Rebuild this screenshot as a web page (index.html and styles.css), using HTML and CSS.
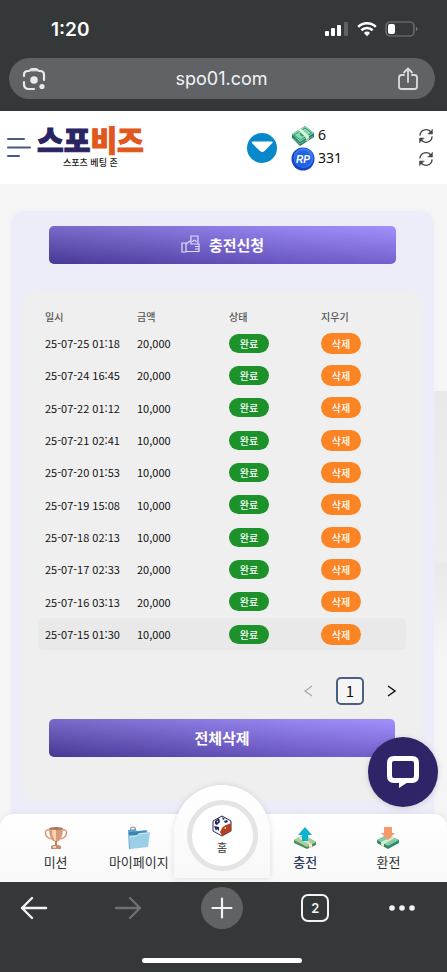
FILE: index.html
```html
<!DOCTYPE html>
<html lang="ko">
<head>
    <meta charset="UTF-8">
    <meta name="viewport" content="width=device-width, initial-scale=1.0">
    <title>스포비즈 - 충전신청</title>
    <link rel="stylesheet" href="styles.css">
</head>
<body>
    <div class="browser-top">
        <div class="status-bar">
            <span class="clock">1:20</span>
            <div class="status-icons">
                <svg width="24" height="16" viewBox="0 0 24 16" fill="#fff">
                    <rect x="0" y="10" width="4" height="5" rx="1"/>
                    <rect x="6" y="7" width="4" height="8" rx="1"/>
                    <rect x="12" y="4" width="4" height="11" rx="1"/>
                    <rect x="19" y="1" width="4" height="14" rx="1" fill="#5f6263"/>
                </svg>
                <svg width="20" height="16" viewBox="0 0 20 16" fill="none" stroke="#fff" stroke-width="2.6">
                    <path d="M1.2 5.9a12.6 12.6 0 0 1 17.6 0"/>
                    <path d="M4.4 9.3a8 8 0 0 1 11.2 0"/>
                    <path d="M10 15.2l-3.1-3.3a4.4 4.4 0 0 1 6.2 0z" fill="#fff" stroke="none"/>
                </svg>
                <svg width="33" height="16" viewBox="0 0 33 16">
                    <rect x="1" y="1" width="28" height="14" rx="4" fill="none" stroke="#777a7b" stroke-width="1.2"/>
                    <rect x="3" y="3" width="7" height="10" rx="2" fill="#fff"/>
                    <path d="M31 6v4q1.5-.4 1.5-2t-1.5-2z" fill="#777a7b"/>
                </svg>
            </div>
        </div>
        <div class="address-bar">
            <button aria-label="이미지 검색">
                <svg width="24" height="24" viewBox="0 0 24 24" fill="none" stroke="#e8eaed" stroke-width="2.2" stroke-linecap="round">
                    <path d="M2 9V8q0-4 4-4h1M17 4h1q4 0 4 4v5M2 15v2q0 5 5 5h5"/>
                    <path d="M7 3.5q1-2 3-2h4q2 0 3 2z" fill="#e8eaed" stroke-width="1"/>
                    <circle cx="12" cy="13" r="3.8" fill="#e8eaed" stroke="none"/>
                    <circle cx="20" cy="19.5" r="2.6" fill="#e8eaed" stroke="none"/>
                </svg>
            </button>
            <input type="text" value="spo01.com" aria-label="주소">
            <button aria-label="공유">
                <svg width="22" height="24" viewBox="0 0 22 24" fill="none" stroke="#dadce0" stroke-width="1.8" stroke-linecap="round" stroke-linejoin="round">
                    <path d="M7 8H4.5Q2 8 2 10.5v9Q2 22 4.5 22h13q2.5 0 2.5-2.5v-9Q20 8 17.5 8H15"/>
                    <path d="M11 15V2M7 5.5l4-4 4 4"/>
                </svg>
            </button>
        </div>
    </div>

    <div class="site">
        <header>
            <button class="menu-btn" aria-label="메뉴">
                <svg width="26" height="22" viewBox="0 0 26 22" stroke="#4b5a85" stroke-width="2" stroke-linecap="round">
                    <path d="M2 2h16M2 10.5h22M2 19h11"/>
                </svg>
            </button>
            <a href="#" class="logo">
                <span class="logo-name">스포<b>비즈</b></span>
                <span class="logo-sub">스포츠 베팅 존</span>
            </a>
            <div class="wallet">
                <button class="toggle-btn" aria-label="펼치기">
                    <svg width="30" height="30" viewBox="0 0 30 30">
                        <circle cx="15" cy="15" r="15" fill="#0788cb"/>
                        <path d="M6 8.5h18.5q2 0 .8 1.6l-7.8 8q-2.3 2-4.6 0l-8-8Q4 8.500 6 8.500z" fill="#fff"/>
                    </svg>
                </button>
                <div class="balances">
                    <div class="balance">
                        <svg width="24" height="22" viewBox="0 0 24 22">
                            <path d="M1 9l13-8 9 7v4l-14 9-8-8z" fill="#237b60"/>
                            <path d="M1 9l13-8 9 7-14 9z" fill="#8ad9b2"/>
                            <path d="M3 10l11-7 6.5 5-11 7z" fill="none" stroke="#35966f" stroke-width="1"/>
                            <ellipse cx="12" cy="9" rx="3.2" ry="2.3" fill="#38a17b"/>
                            <path d="M7 5l3-1.5 8 7.5-.2 4-2.8 1.5v-4z" fill="#e0f5dc"/>
                            <path d="M2 13l7 6 13-8" fill="none" stroke="#6bbd98" stroke-width="1"/>
                        </svg>
                        <span>6</span>
                        <button aria-label="새로고침">
                            <svg width="16" height="16" viewBox="0 0 16 16" fill="none" stroke="#444" stroke-width="1.4" stroke-linecap="round">
                                <path d="M2 7a6 6 0 0 1 11-2.6M14 9a6 6 0 0 1-11 2.6"/>
                                <path d="M14.5 1.5v4.5h-4.5zM1.5 14.5V10H6z" fill="#444" stroke-width=".5"/>
                            </svg>
                        </button>
                    </div>
                    <div class="balance">
                        <svg width="24" height="24" viewBox="0 0 24 24">
                            <circle cx="12" cy="12" r="11.5" fill="#1742c4"/>
                            <circle cx="12.5" cy="11" r="10" fill="#377cf5"/>
                            <circle cx="12" cy="12" r="8.5" fill="#2162df"/>
                            <text x="12" y="16" text-anchor="middle" class="rp">RP</text>
                        </svg>
                        <span>331</span>
                        <button aria-label="새로고침">
                            <svg width="16" height="16" viewBox="0 0 16 16" fill="none" stroke="#444" stroke-width="1.4" stroke-linecap="round">
                                <path d="M2 7a6 6 0 0 1 11-2.6M14 9a6 6 0 0 1-11 2.6"/>
                                <path d="M14.5 1.5v4.5h-4.5zM1.5 14.5V10H6z" fill="#444" stroke-width=".5"/>
                            </svg>
                        </button>
                    </div>
                </div>
            </div>
        </header>

        <main>
            <div class="backdrop"></div>
            <section class="panel">
                <button class="main-btn">
                    <svg width="20" height="20" viewBox="0 0 20 20" fill="none" stroke="#e4defc" stroke-width="1.2">
                        <path d="M1 9h4v9H1zM5 10l4-3h1v3h8v7.5H5zM10 9V2h7v7.5M11.5 8q1-2 2-2t2 2M14 12.5h4M14 15h4"/>
                    </svg>
                    충전신청
                </button>

                <div class="history">
                    <table>
                        <thead>
                            <tr><th>일시</th><th>금액</th><th>상태</th><th>지우기</th></tr>
                        </thead>
                        <tbody>
                            <tr><td>25-07-25 01:18</td><td>20,000</td><td><span class="done">완료</span></td><td><button class="delete">삭제</button></td></tr>
                            <tr><td>25-07-24 16:45</td><td>20,000</td><td><span class="done">완료</span></td><td><button class="delete">삭제</button></td></tr>
                            <tr><td>25-07-22 01:12</td><td>10,000</td><td><span class="done">완료</span></td><td><button class="delete">삭제</button></td></tr>
                            <tr><td>25-07-21 02:41</td><td>10,000</td><td><span class="done">완료</span></td><td><button class="delete">삭제</button></td></tr>
                            <tr><td>25-07-20 01:53</td><td>10,000</td><td><span class="done">완료</span></td><td><button class="delete">삭제</button></td></tr>
                            <tr><td>25-07-19 15:08</td><td>10,000</td><td><span class="done">완료</span></td><td><button class="delete">삭제</button></td></tr>
                            <tr><td>25-07-18 02:13</td><td>10,000</td><td><span class="done">완료</span></td><td><button class="delete">삭제</button></td></tr>
                            <tr><td>25-07-17 02:33</td><td>20,000</td><td><span class="done">완료</span></td><td><button class="delete">삭제</button></td></tr>
                            <tr><td>25-07-16 03:13</td><td>20,000</td><td><span class="done">완료</span></td><td><button class="delete">삭제</button></td></tr>
                            <tr class="active"><td>25-07-15 01:30</td><td>10,000</td><td><span class="done">완료</span></td><td><button class="delete">삭제</button></td></tr>
                        </tbody>
                    </table>

                    <div class="pager">
                        <button aria-label="이전" disabled>
                            <svg width="10" height="12" viewBox="0 0 10 12" fill="none" stroke="#aaa" stroke-width="1.3"><path d="M9 1L2 6l7 5"/></svg>
                        </button>
                        <button class="current">1</button>
                        <button aria-label="다음">
                            <svg width="10" height="12" viewBox="0 0 10 12" fill="none" stroke="#111" stroke-width="1.5"><path d="M1 1l7 5-7 5"/></svg>
                        </button>
                    </div>

                    <button class="main-btn">전체삭제</button>
                </div>
            </section>
        </main>

        <button class="chat-btn" aria-label="채팅 상담">
            <svg width="34" height="34" viewBox="0 0 34 34">
                <path d="M8 3.5h18q4.5 0 4.5 4.5v13q0 4.5-4.5 4.5H8q-4.5 0-4.5-4.5V8q0-4.5 4.5-4.5z" fill="none" stroke="#fff" stroke-width="5"/>
                <path d="M13 33v-6q1.5-3.5 8-4h4v4.8h-4z" fill="#fff"/>
            </svg>
        </button>

        <nav class="tabs">
            <a href="#">
                <svg width="24" height="24" viewBox="0 0 24 24">
                    <path d="M6 4Q1 3 1.5 7q.5 5 6 6M18 4q5-1 4.5 3-.5 5-6 6" fill="none" stroke="#d79a78" stroke-width="1.5"/>
                    <path d="M5 2h14q0 13-7 14Q5 15 5 2z" fill="#d99b76"/>
                    <path d="M8 3h4v12Q8 13 8 3z" fill="#f7d2b8"/>
                    <ellipse cx="12" cy="2.5" rx="7" ry="1.5" fill="#a9765b"/>
                    <path d="M11 15h2v4h-2z" fill="#b98062"/>
                    <path d="M7 23v-3q5-3 10 0v3z" fill="#c68f6f"/>
                    <path d="M9 20h3v2H9z" fill="#f2cdb1"/>
                </svg>
                미션
            </a>
            <a href="#">
                <svg width="24" height="24" viewBox="0 0 24 24">
                    <circle cx="6" cy="3.5" r="2.5" fill="none" stroke="#999" stroke-width="1.2"/>
                    <path d="M1 4l7-1 2 2 10-1 1 15L2 23z" fill="#5fa5cd"/>
                    <path d="M2 6l17-1v4H2z" fill="#3f83ad"/>
                    <path d="M2 10l8-1 2-2 11-1-2 15-18 2z" fill="#9bcfe8"/>
                    <path d="M3 11l7-1 2-2 10-1" fill="none" stroke="#cae8f5" stroke-width="1"/>
                </svg>
                마이페이지
            </a>
            <a href="#" class="home">
                <span class="ring">
                    <svg width="20" height="22" viewBox="0 0 20 22">
                        <path d="M10 1l9 5v10l-9 5-9-5V6z" fill="#fff" stroke="#23285b" stroke-width="1"/>
                        <path d="M12 11l7-3v8l-9 5-2-4 2-4z" fill="#b4411e"/>
                        <path d="M3 6l4-3 1 4-3 3-2-1zM10 2l3 2-2 1zM2 11l5 1v4l-2-2-1 2zM12 6l3-1 1 2-3 1z" fill="#23285b"/>
                        <path d="M4.5 6.5l1.5-1v2zM12 13l2-1v2z" fill="#fff"/>
                    </svg>
                    홈
                </span>
            </a>
            <a href="#" class="active">
                <svg width="24" height="24" viewBox="0 0 24 24">
                    <path d="M1 14l10-5 12 7v3l-9 4L1 17z" fill="#4d8b5c"/>
                    <path d="M1 14l10-5 12 7-9 5z" fill="#a6cea0"/>
                    <path d="M5 12l3-1 11 7v3l-3 1v-4z" fill="#e9e8c8"/>
                    <path d="M12 1l7 8h-4v6H9V9H5z" fill="#0fb2ce"/>
                </svg>
                충전
            </a>
            <a href="#">
                <svg width="24" height="24" viewBox="0 0 24 24">
                    <path d="M1 14l10-5 12 5v3l-11 6L1 17z" fill="#338767"/>
                    <path d="M1 14l10-5 12 5-11 6z" fill="#86cba8"/>
                    <path d="M16 11l3 1-11 6v3l-3-2v-3z" fill="#dcead0"/>
                    <path d="M8 1h8v6h3l-7 7-7-7h3z" fill="#f79a6b"/>
                </svg>
                환전
            </a>
        </nav>
    </div>

    <div class="browser-bottom">
        <div class="toolbar">
            <button aria-label="뒤로">
                <svg width="28" height="24" viewBox="0 0 28 24" fill="none" stroke="#f1f3f4" stroke-width="2.4" stroke-linecap="round" stroke-linejoin="round"><path d="M26 12H2M12 2L2 12l10 10"/></svg>
            </button>
            <button aria-label="앞으로" disabled>
                <svg width="28" height="24" viewBox="0 0 28 24" fill="none" stroke="#6c7072" stroke-width="2.4" stroke-linecap="round" stroke-linejoin="round"><path d="M2 12h24M16 2l10 10-10 10"/></svg>
            </button>
            <button class="new-tab" aria-label="새 탭">
                <svg width="22" height="22" viewBox="0 0 22 22" stroke="#f1f3f4" stroke-width="2.2" stroke-linecap="round"><path d="M11 1.5v19M1.5 11h19"/></svg>
            </button>
            <button><span class="tab-count">2</span></button>
            <button class="more" aria-label="더보기">
                <svg width="26" height="6" viewBox="0 0 26 6" fill="#f1f3f4"><circle cx="3" cy="3" r="2.8"/><circle cx="13" cy="3" r="2.8"/><circle cx="23" cy="3" r="2.8"/></svg>
            </button>
        </div>
        <div class="home-indicator"></div>
    </div>
</body>
</html>
```
FILE: styles.css
```css
* {
    box-sizing: border-box;
}
body {
    font-family: 'Noto Sans CJK KR', 'Noto Sans', sans-serif;
    margin: 0;
    height: 100vh;
    display: flex;
    flex-direction: column;
    background: #343839;
    color: #111;
    overflow: hidden;
}
button {
    font-family: inherit;
    color: inherit;
    background: none;
    border: none;
    padding: 0;
    cursor: pointer;
}
a {
    color: inherit;
    text-decoration: none;
}
svg {
    display: block;
    flex-shrink: 0;
}

/* Browser top */
.browser-top {
    padding: 16px 12px 12px 9px;
}
.status-bar {
    display: flex;
    justify-content: space-between;
    align-items: center;
    height: 26px;
    margin-bottom: 16px;
    padding: 0 17px 0 42px;
}
.clock {
    font-family: Inter, sans-serif;
    font-size: 19px;
    font-weight: 600;
    color: #fff;
}
.status-icons {
    display: flex;
    gap: 8px;
}
.address-bar {
    display: flex;
    align-items: center;
    height: 41px;
    padding: 0 16px 0 13px;
    border-radius: 21px;
    background: #5f6366;
}
.address-bar input {
    flex: 1;
    min-width: 0;
    border: none;
    background: none;
    text-align: center;
    font-family: Inter, sans-serif;
    font-size: 18px;
    color: #f1f3f4;
}

/* Site */
.site {
    position: relative;
    flex: 1;
    min-height: 0;
    overflow: hidden;
    background: #f5f5f5;
}
header {
    display: flex;
    align-items: center;
    height: 73px;
    padding: 0 13px 0 6px;
    background: #fff;
}
.logo {
    display: flex;
    flex-direction: column;
    align-items: center;
    gap: 3px;
    margin: 0 0 2px 5px;
}
.logo-name {
    font-size: 29px;
    font-weight: 900;
    line-height: 29px;
    color: #2b2463;
    -webkit-text-stroke: 1px;
}
.logo-name b {
    font-weight: 900;
    color: #e2571c;
}
.logo-sub {
    font-size: 9px;
    font-weight: 500;
    line-height: 12px;
    color: #222;
}
.wallet {
    display: flex;
    align-items: center;
    gap: 14px;
    width: 187px;
    margin-left: auto;
}
.balances {
    flex: 1;
}
.balance {
    display: flex;
    align-items: center;
    gap: 3px;
    height: 23px;
    font-family: 'Noto Sans', sans-serif;
    font-size: 14px;
}
.balance span {
    padding-bottom: 3px;
}
.balance button {
    margin-left: auto;
}
.rp {
    font-family: 'Liberation Sans', sans-serif;
    font-size: 10px;
    font-weight: bold;
    font-style: italic;
    fill: #fff;
}

/* Charge panel */
main {
    position: relative;
    padding: 27px 13px 0 11px;
}
.backdrop {
    position: absolute;
    top: 207px;
    right: 0;
    width: 16px;
    height: 264px;
    background: linear-gradient(#e9e9e9, #eeeeee 64%, #e9e9e9 66%, #f5f5f5);
}
.panel {
    position: relative;
    padding: 15px 12px 40px;
    border-radius: 14px;
    background: #ededfa;
    box-shadow: 0 0 4px #ededfa;
}
.main-btn {
    display: flex;
    align-items: center;
    justify-content: center;
    gap: 8px;
    width: calc(100% - 52px);
    height: 38px;
    margin: 0 auto;
    padding-bottom: 2px;
    border-radius: 5px;
    background: linear-gradient(to bottom, rgba(175, 160, 255, 0.4), rgba(50, 30, 120, 0.35)), linear-gradient(to right, #5446a4, #8875e8 70%, #9985fa);
    color: #fff;
    font-size: 15px;
    font-weight: bold;
}
.history {
    margin-top: 27px;
    padding: 16px 16px 43px 15px;
    border-radius: 14px;
    background: #efefef;
    box-shadow: 0 0 4px #efefef;
}
.history .main-btn {
    width: calc(100% - 22px);
}
table {
    width: 100%;
    table-layout: fixed;
    border-collapse: collapse;
    text-align: left;
}
th {
    height: 20px;
    padding: 0 0 0 7px;
    font-size: 10px;
    font-weight: 500;
    line-height: 20px;
    color: #555;
}
td {
    height: 32px;
    padding: 0 0 0 7px;
    font-size: 11px;
    line-height: 20px;
    white-space: nowrap;
}
tr:nth-child(3n) td {
    height: 33px;
}
tr.active td {
    background: #e9e9e9;
}
tr.active td:first-child {
    border-radius: 6px 0 0 6px;
}
tr.active td:last-child {
    border-radius: 0 6px 6px 0;
}
.done, .delete {
    display: block;
    width: 40px;
    height: 19px;
    border-radius: 11px;
    background: #1d922b;
    color: #fff;
    font-size: 10px;
    font-weight: 500;
    line-height: 19px;
    text-align: center;
}
.delete {
    height: 21px;
    background: #fb8424;
    line-height: 21px;
}
.pager {
    display: flex;
    justify-content: flex-end;
    gap: 14px;
    margin: 27px 0 14px;
}
.pager button {
    display: flex;
    align-items: center;
    justify-content: center;
    width: 28px;
    height: 28px;
    font-size: 15px;
}
.pager .current {
    padding-bottom: 2px;
    border: 2px solid #4b5f80;
    border-radius: 5px;
    background: #f5f5f5;
}

/* Chat */
.chat-btn {
    position: absolute;
    right: 9px;
    bottom: 75px;
    display: flex;
    align-items: center;
    justify-content: center;
    width: 70px;
    height: 70px;
    border-radius: 50%;
    background: #2f2468;
    box-shadow: 0 1px 6px rgba(0, 0, 0, 0.15);
}

/* Bottom tabs */
.tabs {
    position: absolute;
    left: 0;
    right: 0;
    bottom: 0;
    display: flex;
    height: 68px;
    padding: 0 17px 0 14px;
    border-radius: 14px 14px 0 0;
    background: linear-gradient(#fff, #f8f8f8);
    box-shadow: 0 0 6px rgba(0, 0, 0, 0.08);
}
.tabs a {
    flex: 1 1 0;
    min-width: 0;
    display: flex;
    flex-direction: column;
    align-items: center;
    gap: 2px;
    padding-top: 12px;
    font-size: 13px;
    line-height: 20px;
    color: #333;
    white-space: nowrap;
}
.tabs a.active {
    font-weight: 500;
    color: #2d3a5e;
}
.tabs a.home {
    align-self: flex-end;
    height: 93px;
    margin: 0 -6px 4px;
    flex-basis: 12px;
    padding-top: 15px;
    border-radius: 48px 48px 0 0;
    background: linear-gradient(#fff, #f8f8f8);
    box-shadow: 0 0 6px rgba(0, 0, 0, 0.12);
}
.ring {
    display: flex;
    flex-direction: column;
    align-items: center;
    justify-content: center;
    width: 71px;
    height: 71px;
    border: 5px solid #e4e4e4;
    border-radius: 50%;
    background: #fff;
    font-size: 11px;
}

/* Browser bottom */
.browser-bottom {
    height: 90px;
    padding: 5px 7px 9px 4px;
    display: flex;
    flex-direction: column;
    justify-content: space-between;
    align-items: center;
}
.toolbar {
    display: flex;
    justify-content: space-between;
    align-items: center;
    width: 100%;
    padding: 0 24px 0 9px;
}
.toolbar button {
    display: flex;
    align-items: center;
    justify-content: center;
    width: 42px;
    height: 42px;
}
.toolbar .new-tab {
    border-radius: 50%;
    background: #5f6366;
}
.toolbar .more {
    width: 28px;
}
.tab-count {
    width: 28px;
    height: 28px;
    border: 2px solid #f1f3f4;
    border-radius: 7px;
    font-family: Inter, sans-serif;
    font-size: 13px;
    font-weight: 600;
    line-height: 24px;
    color: #f1f3f4;
}
.home-indicator {
    width: 160px;
    height: 5px;
    border-radius: 3px;
    background: #fff;
}
```
